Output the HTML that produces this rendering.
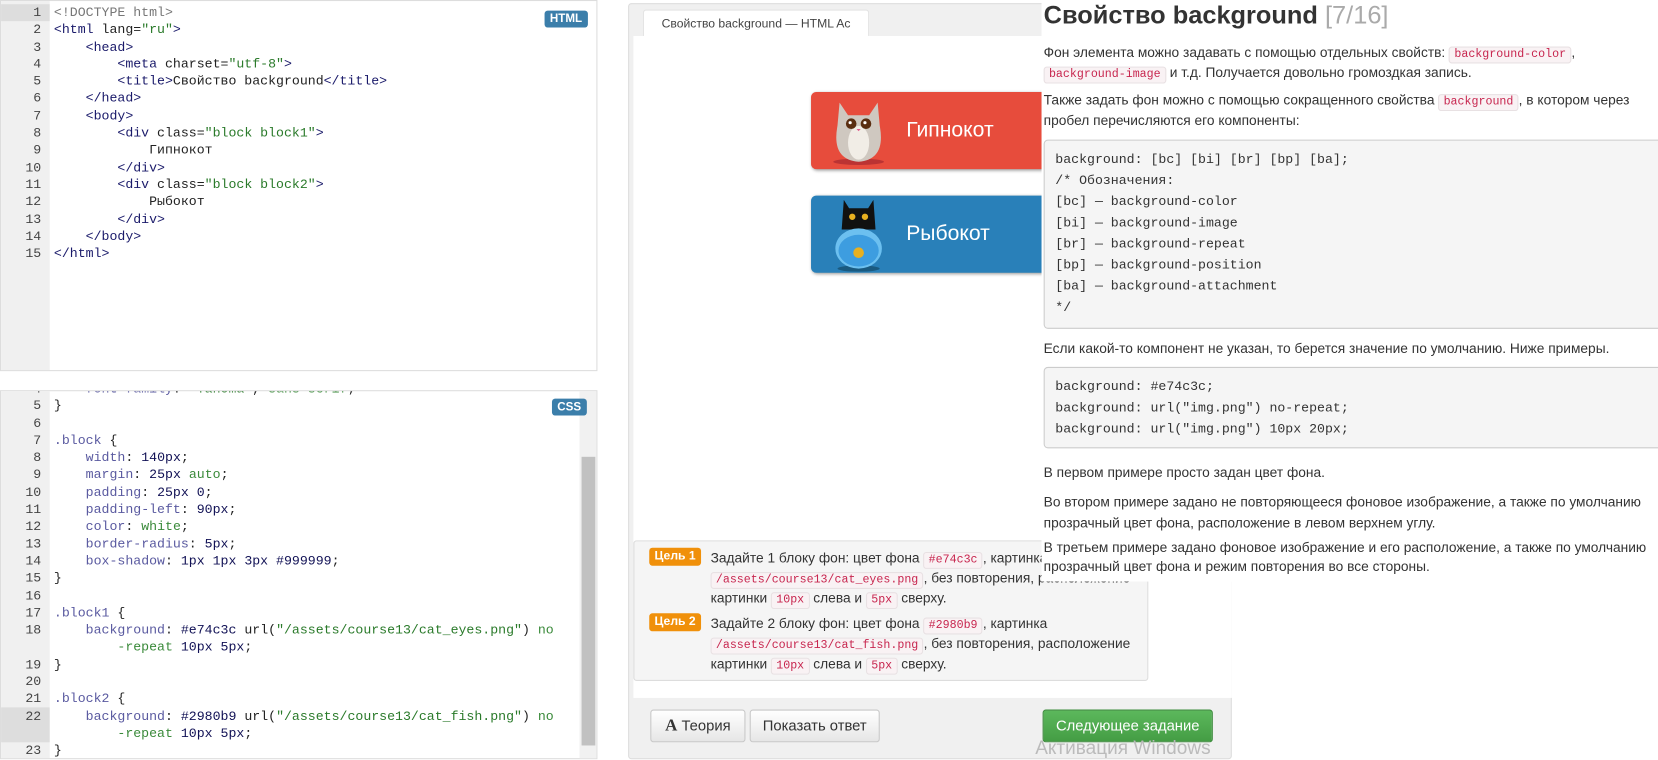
<!DOCTYPE html>
<html><head><meta charset="utf-8"><style>
*{margin:0;padding:0;box-sizing:border-box}
html,body{width:1658px;height:760px;overflow:hidden;background:#fff}
#w{position:absolute;left:0;top:0;width:1568px;height:719px;transform:scale(1.05740);transform-origin:0 0;font-family:"Liberation Sans",sans-serif}
.ed{position:absolute;left:0;width:565px;background:#fff;border:1px solid #ddd;overflow:hidden}
.gut{position:absolute;left:0;top:0;bottom:0;width:46px;background:#f0f0f0}
.code{position:absolute;left:0;font-family:"Liberation Mono","DejaVu Sans Mono",monospace;font-size:12.5px;line-height:16.3px;white-space:pre;color:#222}
.ln{display:inline-block;width:38px;text-align:right;color:#444;margin-right:12px}
.t{color:#1a1a6a}.s{color:#2a7a2a}.p{color:#5a5aa0}.n{color:#115}.k{color:#3a8a3a}.g{color:#777}
.badge{position:absolute;background:#3b7eaa;color:#fff;font-weight:bold;font-size:11px;padding:2px 5px;border-radius:3px;z-index:2}
.frame{position:absolute;left:594px;top:3px;width:571px;height:715px;background:#f0f0f0;border:1px solid #ddd;border-radius:3px}
.tab{position:absolute;left:13px;top:5px;width:214px;height:28px;background:#fff;border:1px solid #e3e3e3;border-bottom:none;border-radius:3px 3px 0 0;font-size:11.5px;color:#444;text-align:center;line-height:26px}
.white{position:absolute;left:4px;top:30px;width:566px;height:626px;background:#fff}
.blk{position:absolute;left:168px;width:260px;height:73px;border-radius:5px;box-shadow:1px 1px 3px #999;color:#fff;font-size:20px;padding-left:90px;line-height:73px}
.goals{position:absolute;left:4px;top:507px;width:487px;height:133px;background:#f5f5f5;border:1px solid #ddd;border-radius:3px;font-size:13px;color:#333;line-height:19px;padding:6px 0 0 72px}
.lbl{position:absolute;left:14px;background:#f0900a;color:#fff;font-weight:bold;font-size:11.5px;padding:1px 5px;border-radius:3px;line-height:15px}
code.i{font-family:"Liberation Mono",monospace;font-size:11px;line-height:13px;color:#c7254e;background:#f9f2f4;border:1px solid #e8e1e3;border-radius:3px;padding:1px 4px}
.btn{position:absolute;top:671px;height:31px;border:1px solid #c8c8c8;border-radius:3px;background:linear-gradient(#fff,#e6e6e6);font-size:14px;color:#333;line-height:29px;text-align:center}
.rp{position:absolute;left:985px;top:0;width:583px;height:550px;background:#fff;font-size:13px;color:#333;line-height:19px}
.rp p{position:absolute;left:2px;width:575px}
.pre{position:absolute;left:2px;width:600px;background:#f5f5f5;border:1px solid #ccc;border-radius:4px;font-family:"Liberation Mono",monospace;font-size:12.5px;line-height:20px;padding:8px 10px;white-space:pre;color:#333}
</style></head><body><div id="w">

<div class="ed" style="top:0;height:351px">
<div class="gut"></div>
<div style="position:absolute;left:0;top:3px;width:46px;height:16px;background:#ddd"></div>
<div class="code" style="top:3px"><span class="ln">1</span><span class="g">&lt;!DOCTYPE html&gt;</span>
<span class="ln">2</span><span class="t">&lt;html</span> lang=<span class="s">"ru"</span><span class="t">&gt;</span>
<span class="ln">3</span>    <span class="t">&lt;head&gt;</span>
<span class="ln">4</span>        <span class="t">&lt;meta</span> charset=<span class="s">"utf-8"</span><span class="t">&gt;</span>
<span class="ln">5</span>        <span class="t">&lt;title&gt;</span>Свойство background<span class="t">&lt;/title&gt;</span>
<span class="ln">6</span>    <span class="t">&lt;/head&gt;</span>
<span class="ln">7</span>    <span class="t">&lt;body&gt;</span>
<span class="ln">8</span>        <span class="t">&lt;div</span> class=<span class="s">"block block1"</span><span class="t">&gt;</span>
<span class="ln">9</span>            Гипнокот
<span class="ln">10</span>        <span class="t">&lt;/div&gt;</span>
<span class="ln">11</span>        <span class="t">&lt;div</span> class=<span class="s">"block block2"</span><span class="t">&gt;</span>
<span class="ln">12</span>            Рыбокот
<span class="ln">13</span>        <span class="t">&lt;/div&gt;</span>
<span class="ln">14</span>    <span class="t">&lt;/body&gt;</span>
<span class="ln">15</span><span class="t">&lt;/html&gt;</span></div>
<div class="badge" style="left:514px;top:9px">HTML</div>
</div>

<div class="ed" style="top:369px;height:349px">
<div class="gut"></div>
<div style="position:absolute;left:0;top:299px;width:46px;height:33px;background:#ddd"></div>
<div class="code" style="top:-10px"><span class="ln">4</span>    <span class="p">font-family</span>: <span class="s">"Tahoma"</span>, <span class="k">sans-serif</span>;
<span class="ln">5</span>}
<span class="ln">6</span>
<span class="ln">7</span><span class="p">.block</span> {
<span class="ln">8</span>    <span class="p">width</span>: <span class="n">140px</span>;
<span class="ln">9</span>    <span class="p">margin</span>: <span class="n">25px</span> <span class="k">auto</span>;
<span class="ln">10</span>    <span class="p">padding</span>: <span class="n">25px 0</span>;
<span class="ln">11</span>    <span class="p">padding-left</span>: <span class="n">90px</span>;
<span class="ln">12</span>    <span class="p">color</span>: <span class="k">white</span>;
<span class="ln">13</span>    <span class="p">border-radius</span>: <span class="n">5px</span>;
<span class="ln">14</span>    <span class="p">box-shadow</span>: <span class="n">1px 1px 3px #999999</span>;
<span class="ln">15</span>}
<span class="ln">16</span>
<span class="ln">17</span><span class="p">.block1</span> {
<span class="ln">18</span>    <span class="p">background</span>: <span class="n">#e74c3c</span> url(<span class="s">"/assets/course13/cat_eyes.png"</span>) <span class="k">no</span>
<span class="ln"></span>        <span class="k">-repeat</span> <span class="n">10px 5px</span>;
<span class="ln">19</span>}
<span class="ln">20</span>
<span class="ln">21</span><span class="p">.block2</span> {
<span class="ln">22</span>    <span class="p">background</span>: <span class="n">#2980b9</span> url(<span class="s">"/assets/course13/cat_fish.png"</span>) <span class="k">no</span>
<span class="ln"></span>        <span class="k">-repeat</span> <span class="n">10px 5px</span>;
<span class="ln">23</span>}</div>
<div class="badge" style="left:521px;top:7px">CSS</div>
<div style="position:absolute;left:547px;top:0;width:17px;height:349px;background:#f1f1f1"></div>
<div style="position:absolute;left:549px;top:62px;width:13px;height:273px;background:#c1c1c1"></div>
</div>

<div class="frame">
<div class="tab">Свойство background — HTML Ac</div>
<div class="white">
<div class="blk" style="top:53px;background:#e74c3c">
<svg style="position:absolute;left:15px;top:4px" width="60" height="66" viewBox="0 0 60 66"><ellipse cx="30" cy="62" rx="24" ry="3" fill="#b33"/><path d="M12 6 L20 18 L40 18 L48 6 L50 28 Q56 60 30 62 Q4 60 10 28Z" fill="#cfc8c0"/><ellipse cx="30" cy="44" rx="10" ry="16" fill="#f1ede6"/><circle cx="23" cy="26" r="5" fill="#5a2d10"/><circle cx="37" cy="26" r="5" fill="#5a2d10"/><circle cx="22" cy="25" r="1.5" fill="#fff"/><circle cx="36" cy="25" r="1.5" fill="#fff"/><path d="M28 31h4l-2 2z" fill="#e05a8a"/></svg>
Гипнокот</div>
<div class="blk" style="top:151px;background:#2980b9">
<svg style="position:absolute;left:15px;top:2px" width="60" height="70" viewBox="0 0 60 70"><ellipse cx="30" cy="67" rx="20" ry="3" fill="#1a5a80"/><path d="M16 2 L21 10 L39 10 L44 2 L46 30 L14 30Z" fill="#111"/><ellipse cx="30" cy="48" rx="22" ry="19" fill="#6cc0f0"/><ellipse cx="30" cy="50" rx="19" ry="15" fill="#3d9de0"/><circle cx="30" cy="52" r="5" fill="#e8b020"/><circle cx="24" cy="18" r="3" fill="#e8b020"/><circle cx="36" cy="18" r="3" fill="#e8b020"/></svg>
Рыбокот</div>
</div>
<div class="goals">
<div class="lbl" style="top:6px">Цель 1</div>
Задайте 1 блоку фон: цвет фона <code class="i">#e74c3c</code>, картинка <code class="i">/assets/course13/cat_eyes.png</code>, без повторения, расположение картинки <code class="i">10px</code> слева и <code class="i">5px</code> сверху.
<div class="lbl" style="top:68px">Цель 2</div>
<div style="margin-top:5px">Задайте 2 блоку фон: цвет фона <code class="i">#2980b9</code>, картинка <code class="i">/assets/course13/cat_fish.png</code>, без повторения, расположение картинки <code class="i">10px</code> слева и <code class="i">5px</code> сверху.</div>
</div>
</div>
<div class="btn" style="left:615px;width:90px"><b style="font-family:'Liberation Serif',serif;font-size:16px">A</b> Теория</div>
<div class="btn" style="left:709px;width:123px">Показать ответ</div>
<div class="btn" style="left:986px;width:161px;background:linear-gradient(#5cb85c,#449d44);border-color:#3d8b3d;color:#fff">Следующее задание</div>
<div style="position:absolute;left:979px;top:697px;font-size:18px;color:#bbb">Активация Windows</div>

<div class="rp">
<div style="position:absolute;left:2px;top:0px;font-size:24px;font-weight:bold;color:#333;line-height:30px">Свойство background <span style="font-weight:normal;color:#aaa">[7/16]</span></div>
<p style="top:40px">Фон элемента можно задавать с помощью отдельных свойств: <code class="i">background-color</code>, <code class="i">background-image</code> и т.д. Получается довольно громоздкая запись.</p>
<p style="top:85px">Также задать фон можно с помощью сокращенного свойства <code class="i">background</code>, в котором через пробел перечисляются его компоненты:</p>
<div class="pre" style="top:132px;height:179px">background: [bc] [bi] [br] [bp] [ba];
/* Обозначения:
[bc] — background-color
[bi] — background-image
[br] — background-repeat
[bp] — background-position
[ba] — background-attachment
*/</div>
<p style="top:320px">Если какой-то компонент не указан, то берется значение по умолчанию. Ниже примеры.</p>
<div class="pre" style="top:347px;height:77px">background: #e74c3c;
background: url("img.png") no-repeat;
background: url("img.png") 10px 20px;</div>
<p style="top:437px">В первом примере просто задан цвет фона.</p>
<p style="top:465px;line-height:20px">Во втором примере задано не повторяющееся фоновое изображение, а также по умолчанию прозрачный цвет фона, расположение в левом верхнем углу.</p>
<p style="top:509px;line-height:18px">В третьем примере задано фоновое изображение и его расположение, а также по умолчанию прозрачный цвет фона и режим повторения во все стороны.</p>
</div>
</div></body></html>
